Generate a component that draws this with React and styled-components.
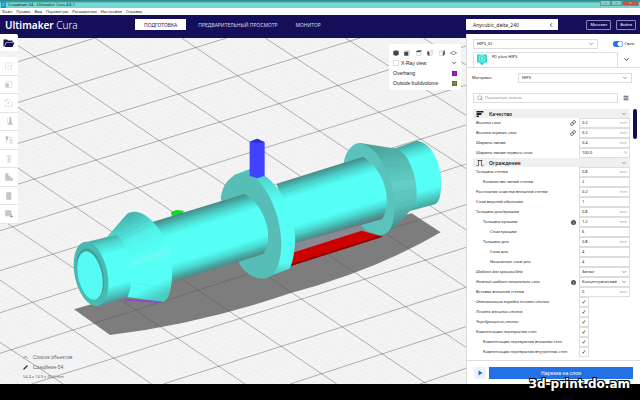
import React, { useId, useState } from 'react';
import styled, { createGlobalStyle, css } from 'styled-components';
import { ChevronDown, ChevronLeft, Link, Menu, Pencil, Search } from 'lucide-react';

const GlobalStyle = createGlobalStyle`
  * {
    box-sizing: border-box;
  }

  body {
    margin: 0;
    background: #000;
    font-family: "Noto Sans", "Open Sans", sans-serif;
    font-size: 4px;
    line-height: 6px;
    color: #222;
  }

  button, input, select {
    font: inherit;
    color: inherit;
    margin: 0;
    padding: 0;
    border: none;
    background: none;
  }
`;

const tools = ['move', 'scale', 'rotate', 'mirror', 'mesh', 'support', 'steps', 'block', 'plugin'];

const quality = [
  { label: 'Высота слоя', value: '0.2', unit: 'mm', italic: true, icon: 'link' },
  { label: 'Высота первого слоя', value: '0.2', unit: 'mm', italic: true, icon: 'link' },
  { label: 'Ширина линии', value: '0.4', unit: 'mm' },
  { label: 'Ширина линии первого слоя', value: '100.0', unit: '%' },
];

const shell = [
  { label: 'Толщина стенки', value: '0.8', unit: 'mm' },
  { label: 'Количество линий стенки', value: '2', level: 1 },
  { label: 'Расстояние очистки внешней стенки', value: '0.2', unit: 'mm' },
  { label: 'Слои верхней оболочки', value: '1' },
  { label: 'Толщина дна/крышки', value: '0.8', unit: 'mm' },
  { label: 'Толщина крышки', value: '1.2', unit: 'mm', level: 1, icon: 'info' },
  { label: 'Слои крышки', value: '6', level: 2 },
  { label: 'Толщина дна', value: '0.8', unit: 'mm', level: 1 },
  { label: 'Слои дна', value: '4', level: 2 },
  { label: 'Начальные слои дна', value: '4', level: 2 },
  { label: 'Шаблон для крышки/дна', type: 'select', value: 'Зигзаг', italic: true },
  { label: 'Нижний шаблон начального слоя', type: 'select', value: 'Концентрический', italic: true, icon: 'info' },
  { label: 'Вставка внешней стенки', value: '0', unit: 'mm' },
  { label: 'Оптимизация порядка печати стенок', type: 'check', italic: true },
  { label: 'Печать внешних стенок', type: 'check', italic: true },
  { label: 'Чередующиеся стенки', type: 'check', italic: true },
  { label: 'Компенсация перекрытия стен', type: 'check' },
  { label: 'Компенсация перекрытия внешних стен', type: 'check', level: 1 },
  { label: 'Компенсация перекрытия внутренних стен', type: 'check', level: 1 },
];

// x1, y1, x2, y2 of the build plate lines
const gridLines = [
  [0, 10, 1398, 952], [0, 195, 1280, 1062], [0, 378, 1010, 1062], [0, 565, 735, 1062],
  [0, 750, 455, 1062], [0, 937, 190, 1062], [285, 24, 1398, 772], [545, 24, 1398, 600],
  [795, 24, 1398, 416], [1035, 24, 1398, 256], [1270, 24, 1398, 105],
  [0, 112, 285, 24], [0, 234, 680, 24], [0, 357, 1080, 24], [0, 479, 1398, 48],
  [0, 602, 1398, 165], [0, 722, 1398, 285], [0, 848, 1398, 402], [0, 970, 1398, 524],
  [95, 1062, 1398, 652], [490, 1062, 1398, 772], [870, 1062, 1398, 890], [1260, 1062, 1398, 1015],
];

const Scene = () => (
  <SceneSvg viewBox="0 24 1398 1038" preserveAspectRatio="xMinYMin slice" aria-hidden="true">
    <defs>
      <pattern id="fine" width="10" height="10" patternUnits="userSpaceOnUse" patternTransform="matrix(1.84 -.57 1.25 .85 0 10)">
        <path d="M0 0H10M0 0V10" stroke="#e8e8e8" strokeWidth="1.2" />
      </pattern>
      <linearGradient id="tube1" gradientUnits="userSpaceOnUse" x1="600" y1="533" x2="656" y2="716">
        <stop offset="0" stopColor="#468a87" />
        <stop offset=".06" stopColor="#45aaa4" />
        <stop offset=".15" stopColor="#4bd8d0" />
        <stop offset=".28" stopColor="#55fff6" />
        <stop offset=".72" stopColor="#55fff6" />
        <stop offset=".84" stopColor="#4bd8d0" />
        <stop offset=".94" stopColor="#489f9b" />
        <stop offset="1" stopColor="#5b7f80" />
      </linearGradient>
      <linearGradient id="tube2" href="#tube1" gradientTransform="translate(360 -113)" />
      <linearGradient id="front" gradientUnits="userSpaceOnUse" x1="300" y1="622" x2="352" y2="815">
        <stop offset="0" stopColor="#45a49e" />
        <stop offset=".12" stopColor="#4bd8d0" />
        <stop offset=".28" stopColor="#55fff6" />
        <stop offset=".75" stopColor="#55fff6" />
        <stop offset=".88" stopColor="#49cbc3" />
        <stop offset="1" stopColor="#4c8f90" />
      </linearGradient>
      <linearGradient id="cone1" gradientUnits="userSpaceOnUse" x1="342" y1="575" x2="450" y2="812">
        <stop offset="0" stopColor="#47b4ad" />
        <stop offset=".12" stopColor="#4bd0c8" />
        <stop offset=".28" stopColor="#53f3ea" />
        <stop offset=".5" stopColor="#55fff6" />
        <stop offset=".85" stopColor="#55fff6" />
        <stop offset="1" stopColor="#4bcdc5" />
      </linearGradient>
      <linearGradient id="cone2" gradientUnits="userSpaceOnUse" x1="1150" y1="345" x2="1215" y2="590">
        <stop offset="0" stopColor="#4ea39d" />
        <stop offset=".2" stopColor="#54b6af" />
        <stop offset=".5" stopColor="#62cfc7" />
        <stop offset=".75" stopColor="#58c0b8" />
        <stop offset="1" stopColor="#438a86" />
      </linearGradient>
      <linearGradient id="end" gradientUnits="userSpaceOnUse" x1="1225" y1="338" x2="1280" y2="530">
        <stop offset="0" stopColor="#449c97" />
        <stop offset=".12" stopColor="#4bd5cd" />
        <stop offset=".25" stopColor="#55fff6" />
        <stop offset=".75" stopColor="#55fff6" />
        <stop offset="1" stopColor="#43a29c" />
      </linearGradient>
      <linearGradient id="rim" x1="0" y1="0" x2="0" y2="1">
        <stop offset="0" stopColor="#4fbdb5" />
        <stop offset=".12" stopColor="#50ddd5" />
        <stop offset=".3" stopColor="#55fff6" />
        <stop offset=".85" stopColor="#55fbf2" />
        <stop offset="1" stopColor="#4db5ae" />
      </linearGradient>
    </defs>

    <rect y="24" width="1398" height="1038" fill="#f4f4f4" />
    <rect y="24" width="1398" height="1038" fill="url(#fine)" />
    <path d="M222 838L330 915Q600 882 870 790Q1130 720 1322 607L1235 550L880 640L520 750Z" fill="#7d7d7d" />
    <g stroke="#555" strokeOpacity=".55" strokeWidth="2.4">
      {gridLines.map(([x1, y1, x2, y2]) => (
        <line key={`${x1}-${y1}`} x1={x1} y1={y1} x2={x2} y2={y2} />
      ))}
    </g>
    <path d="M885 634L1100 568L1130 605L880 670Z" fill="#8a8890" />
    <path d="M513 546L530 540L551 542L548 556L515 558Z" fill="#0ddb1c" />
    <path d="M878 668L1085 602L1148 620L872 708Z" fill="#cd0000" />
    <path d="M872 708L1148 620L1135 618L873 702Z" fill="#8d0000" />

    {/* far end */}
    <path d="M1180 357L1250 332C1300 338 1328 410 1323 475C1321 505 1316 517 1305 523L1230 543Z" fill="url(#end)" />
    <path d="M1080 339L1195 357C1238 385 1258 470 1247 525L1168 608L1130 570Z" fill="url(#cone2)" />
    <g stroke="#3f908b" strokeOpacity=".18" strokeWidth="2">
      <path d="M1125 365L1215 378M1150 405L1232 410M1166 450L1244 445M1177 490L1250 480M1182 530L1248 503M1180 560L1247 520" />
    </g>
    <path d="M1030 405C1035 360 1060 339 1080 339C1145 350 1197 480 1180 570C1173 607 1155 616 1140 615C1115 612 1098 602 1088 592Z" fill="#5ac4bc" />
    <path d="M830 462L1090 380C1155 420 1178 515 1146 568L884 640Z" fill="url(#tube2)" />

    {/* middle ring */}
    <path d="M700 436L750 417L790 434C862 482 890 590 885 640C882 680 876 704 868 716L785 747Z" fill="url(#rim)" />
    <path d="M662 504C668 455 700 427 742 428C802 455 850 570 843 660C838 722 815 747 785 746C755 743 730 725 718 700Z" fill="#56beb6" />
    <path d="M455 577L735 492C800 530 822 630 790 672L518 757Z" fill="url(#tube1)" />
    <g stroke="#3d9691" strokeOpacity=".22" strokeWidth="2">
      <path d="M480 585L750 503M485 596L762 513M530 734L795 652M525 743L790 664M840 475L1105 391M850 488L1114 404M885 607L1158 535M885 620L1154 548" />
    </g>
    <path d="M749 335L772 326L794 337V437L772 445L749 437Z" fill="#4141ff" />
    <path d="M749 335L772 326L794 337L772 340Z" fill="#3030cf" />

    {/* near end */}
    <path d="M370 806L490 814L475 819L375 812Z" fill="#8b4fc4" />
    <path d="M318 625L380 553Q388 545 405 545C462 548 518 650 517 710C517 780 505 811 490 815L375 800Z" fill="url(#cone1)" />
    <path d="M395 690L505 650L512 676L395 712Z" fill="#8af7f1" opacity=".35" />
    <g stroke="#3f9f99" strokeOpacity=".2" strokeWidth="2">
      <path d="M335 622L405 552M345 622L423 560M354 625L440 572M362 630L455 586M396 758L508 776M392 772L503 794" />
    </g>
    <path d="M250 638L350 615C398 655 407 745 383 800L295 829Z" fill="url(#front)" />
    <g transform="rotate(-12 273 732)">
      <ellipse cx="273" cy="732" rx="49" ry="98" fill="#49b9b1" />
      <ellipse cx="271" cy="732" rx="39" ry="79" fill="#409f99" />
      <ellipse cx="269" cy="736" rx="36" ry="74" fill="#55fbf2" />
    </g>
  </SceneSvg>
);

const ToolIcon = ({ name }) => (
  <svg width="10" height="10" viewBox="0 0 20 20" fill="none" stroke="#c9c9cf" strokeWidth="1.5">
    {name === 'move' && <path d="M3 4H15V16H3ZM6 12L9 8L12 12L16 10" stroke="#dddde2" />}
    {name === 'scale' && <><path d="M3 5H15V17H3Z" stroke="#dddde2" /><path d="M4 9H9V16H4Z" fill="#c9c9cf" /></>}
    {name === 'rotate' && <path d="M3 8V3H12L16 7V17H3V12M6 10H12M9 7V13" strokeDasharray="4 2" />}
    {name === 'mirror' && <><path d="M7 3V17" stroke="#dddde2" /><path d="M11 3H14V11L17 17H9L11 12Z" fill="#b9b9c4" /></>}
    {name === 'mesh' && <><path d="M3 3H8V9H5V16" fill="#bbb" /><path d="M11 5H17M14 8L17 12H11ZM10 16H18" /></>}
    {name === 'support' && <path d="M4 4H15M7 8H12V12H6M5 16H14M10 4V16" />}
    {name === 'steps' && <path d="M3 3H8V8H12V12H17V17H3Z" fill="#c4c4ce" />}
    {name === 'block' && <path d="M5 3H14V17H5Z" fill="#c4c4ce" />}
    {name === 'plugin' && <><path d="M3 3H14V14H3ZM8 3V14M3 8H14" fill="#c4c4ce" /><path d="M15 11V18M12 15H18" stroke="#a9a9b5" strokeWidth="2" /></>}
  </svg>
);

const cubeFills = ['M8 1L15 4V12L8 15L1 12V4Z', 'M1 5H11V15H1Z', 'M1 4L5 1H15L11 5H1Z', 'M1 3L6 6V15L1 12Z', 'M11 5L15 1V11L11 15Z'];

const CubeIcon = ({ fill }) => (
  <svg width="6" height="6" viewBox="0 0 16 16" stroke="#666" strokeWidth="1" fill="none">
    <path d="M1 5H11V15H1ZM1 5L5 1H15V11L11 15M11 5L15 1" strokeOpacity=".5" />
    <path d={fill} fill="#444" />
  </svg>
);

const SettingRow = ({ item }) => {
  const id = useId();
  const [value, setValue] = useState(item.value || '');
  const [checked, setChecked] = useState(true);

  return (
    <Row>
      <RowLabel htmlFor={id} $level={item.level || 0} $italic={item.italic}>{item.label}</RowLabel>
      {item.icon === 'link' && <Link size={6} color="#333" strokeWidth={3} />}
      {item.icon === 'info' && <InfoDot>i</InfoDot>}
      <Field>
        {item.type === 'check' && (
          <CheckBox id={id} type="checkbox" checked={checked} onChange={(e) => setChecked(e.target.checked)} />
        )}
        {item.type === 'select' && (
          <FieldBox>
            <Select id={id} defaultValue={item.value}>
              <option>{item.value}</option>
            </Select>
            <ChevronDown size={6} color="#333" />
          </FieldBox>
        )}
        {!item.type && (
          <FieldBox>
            <TextInput id={id} value={value} onChange={(e) => setValue(e.target.value)} />
            {item.unit && <Unit>{item.unit}</Unit>}
          </FieldBox>
        )}
      </Field>
    </Row>
  );
};

const App = () => {
  const [search, setSearch] = useState('');

  return (
    <>
      <GlobalStyle />
      <Window>
        <TitleBar>
          <AppBadge>C</AppBadge>
          <span>Соедйнин-54 - Ultimaker Cura 4.6.1</span>
          <WindowButtons>
            <WindowButton aria-label="Свернуть">–</WindowButton>
            <WindowButton aria-label="Развернуть">▫</WindowButton>
            <WindowButton aria-label="Закрыть" $close>×</WindowButton>
          </WindowButtons>
        </TitleBar>
        <MenuBar>
          {['Файл', 'Правка', 'Вид', 'Параметры', 'Расширения', 'Настройки', 'Справка'].map((m) => (
            <button key={m}>{m}</button>
          ))}
        </MenuBar>
        <Header>
          <Logo><b>Ultimaker</b> Cura</Logo>
          <Stages>
            <StageTab $active>ПОДГОТОВКА</StageTab>
            <StageTab>ПРЕДВАРИТЕЛЬНЫЙ ПРОСМОТР</StageTab>
            <StageTab>МОНИТОР</StageTab>
          </Stages>
          <Account>
            <Machine>Anycubic_delta_240<ChevronLeft size={6} strokeWidth={3} /></Machine>
            <OutlineButton>Магазин</OutlineButton>
            <OutlineButton>Войти</OutlineButton>
          </Account>
        </Header>

        <Workspace>
          <Viewport>
            <Scene />
            <Toolbar>
              <OpenButton aria-label="Открыть файл">
                <svg width="12" height="10" viewBox="0 0 24 20" fill="#10104e">
                  <path d="M1 18V3H8L10 5H19V8H6L3 16Z" />
                  <path d="M7 9H23L19 18H3Z" />
                </svg>
              </OpenButton>
              <ToolList>
                {tools.map((t) => (
                  <ToolButton key={t} aria-label={t}><ToolIcon name={t} /></ToolButton>
                ))}
              </ToolList>
            </Toolbar>

            <ViewCard>
              <ViewIcons>
                {cubeFills.map((f) => <CubeIcon key={f} fill={f} />)}
                <svg width="7" height="6" viewBox="0 0 16 12" fill="none" stroke="#555" strokeWidth="1.5">
                  <path d="M1 6L6 3H10L15 6L10 9H6Z" />
                </svg>
              </ViewIcons>
              <ViewRow>
                <ViewSwatch />
                <ViewName>X-Ray view</ViewName>
                <ChevronDown size={6} color="#222" strokeWidth={3} />
              </ViewRow>
              <ViewRow><span>Overhang</span><Swatch $color="#a31fc4" /></ViewRow>
              <ViewRow><span>Outside buildvolume</span><Swatch $color="#86863f" /></ViewRow>
            </ViewCard>

            <ModelInfo>
              <InfoLine>
                <svg width="5" height="5" viewBox="0 0 10 10" fill="none" stroke="#555" strokeWidth="1.5"><path d="M1 6L5 3L9 6" /></svg>
                Список объектов
              </InfoLine>
              <InfoLine><Pencil size={5} fill="#333" />Соедйнин-54</InfoLine>
              <div>54.4 x 14.9 x 20.0 mm</div>
            </ModelInfo>
          </Viewport>

          <SidePanel>
            <ProfileRow>
              <SelectBox>
                <Select aria-label="Профиль" defaultValue="HIPS_02"><option>HIPS_02</option></Select>
                <ChevronDown size={6} color="#333" />
              </SelectBox>
              <Switch><input type="checkbox" defaultChecked />Своя</Switch>
            </ProfileRow>
            <ExtruderRow>
              <ExtruderTab>
                <svg width="12" height="12" viewBox="0 0 24 24">
                  <path d="M2 1H22V17H17L12 23L7 17H2Z" fill="#2fd9c9" />
                  <circle cx="12" cy="9" r="6" fill="none" stroke="#b8f6ef" strokeWidth="1.5" />
                  <path d="M12 6V12" stroke="#fff" strokeWidth="2" />
                </svg>
                <span>FD plast HIPS</span>
              </ExtruderTab>
              <IconCell><ChevronDown size={7} strokeWidth={3} /></IconCell>
            </ExtruderRow>
            <MaterialRow>
              <label htmlFor="material">Материал</label>
              <SelectBox>
                <Select id="material" defaultValue="HIPS"><option>HIPS</option></Select>
                <ChevronDown size={6} color="#333" />
              </SelectBox>
            </MaterialRow>
            <SearchRow>
              <SearchBox>
                <Search size={6} color="#777" />
                <TextInput
                  aria-label="Поиск"
                  placeholder="Параметры поиска"
                  value={search}
                  onChange={(e) => setSearch(e.target.value)}
                />
              </SearchBox>
              <IconCell><Menu size={6} strokeWidth={3} /></IconCell>
            </SearchRow>

            <SettingsArea>
              <SettingsList>
                <SectionHeader>
                  <svg width="8" height="6" viewBox="0 0 16 12" fill="#222"><path d="M1 0H15V3H1ZM1 4H11V8H1ZM1 9H6V12H1Z" /></svg>
                  <span>Качество</span>
                  <ChevronDown size={6} color="#444" />
                </SectionHeader>
                {quality.map((item) => <SettingRow key={item.label} item={item} />)}
                <SectionHeader>
                  <svg width="8" height="6" viewBox="0 0 16 12" fill="none" stroke="#444" strokeWidth="1.5"><path d="M1 11H5V1H11V11H15M3 1H13" /></svg>
                  <span>Ограждение</span>
                  <ChevronDown size={6} color="#444" />
                </SectionHeader>
                {shell.map((item) => <SettingRow key={item.label} item={item} />)}
              </SettingsList>
              <ScrollThumb />
            </SettingsArea>

            <ActionBar>
              <PlayButton aria-label="Предпросмотр">
                <svg width="5" height="6" viewBox="0 0 10 12" fill="#1f66d6"><path d="M1 1L9 6L1 11Z" /></svg>
              </PlayButton>
              <SliceButton>Нарезка на слои</SliceButton>
            </ActionBar>
          </SidePanel>
        </Workspace>
        <Watermark>3d-print.do.am</Watermark>
      </Window>
    </>
  );
};

const Window = styled.div`
  position: relative;
  display: flex;
  flex-direction: column;
  min-height: 100vh;
  padding-bottom: 16px;
  overflow: hidden;
`;

const TitleBar = styled.div`
  display: flex;
  align-items: flex-end;
  gap: 2px;
  height: 8px;
  padding: 0 1px;
  color: #021c1c;
  background: linear-gradient(#2b8987 0, #3b9c99 20%, #7adad5 40%, #74d3ce 100%);
`;

const AppBadge = styled.span`
  width: 5px;
  height: 6px;
  text-align: center;
  color: #fff;
  background: #1595d6;
`;

const WindowButtons = styled.div`
  display: flex;
  align-self: flex-start;
  padding-top: 1px;
  margin-left: auto;
`;

const WindowButton = styled.button`
  width: ${(p) => (p.$close ? '17px' : '11px')};
  height: 5px;
  line-height: 4px;
  color: ${(p) => (p.$close ? '#fff' : '#244')};
  background: ${(p) => (p.$close ? '#c9534c' : '#8cc4c2')};
  border: 1px solid #5a9c9a;
  border-top: none;
`;

const MenuBar = styled.nav`
  display: flex;
  align-items: center;
  gap: 4px;
  height: 7px;
  padding: 0 2px;
  background: #fff;
`;

const Header = styled.header`
  display: flex;
  align-items: center;
  height: 23px;
  padding-bottom: 4px;
  color: #fff;
  background: #150e58;
`;

const Logo = styled.div`
  width: 135px;
  padding-left: 5px;
  font-size: 10px;
  line-height: 12px;
  font-weight: 300;

  b {
    font-weight: 600;
  }
`;

const Stages = styled.nav`
  display: flex;
  flex: 1;
  gap: 6px;
`;

const StageTab = styled.button`
  height: 11px;
  padding: 0 ${(p) => (p.$active ? '9px' : '6px')};
  font-size: 5px;
  color: ${(p) => (p.$active ? '#150e58' : '#dcdcee')};
  background: ${(p) => (p.$active ? '#fff' : 'none')};
`;

const Account = styled.div`
  display: flex;
  align-items: center;
  gap: 5px;
  width: 174px;
  padding-right: 4px;
`;

const Machine = styled.button`
  display: flex;
  flex-shrink: 0;
  align-items: center;
  justify-content: space-between;
  width: 92px;
  height: 11px;
  margin-right: auto;
  padding: 0 4px 0 7px;
  font-size: 5px;
  color: #222;
  background: #fff;
`;

const OutlineButton = styled.button`
  height: 10px;
  padding: 0 3px;
  border: 1px solid #8c88b5;
  border-radius: 1px;
`;

const Workspace = styled.main`
  display: flex;
  flex: 1;
`;

const Viewport = styled.section`
  position: relative;
  flex: 1;
  min-width: 0;
`;

const SceneSvg = styled.svg`
  position: absolute;
  inset: 0;
  width: 100%;
  height: 100%;
`;

const Toolbar = styled.div`
  position: relative;
  display: flex;
  flex-direction: column;
  gap: 6px;
  width: 18px;
  margin-top: -4px;
`;

const OpenButton = styled.button`
  display: grid;
  place-items: center;
  height: 17px;
  background: #fff;
  border-radius: 0 2px 2px 0;
`;

const ToolList = styled.div`
  display: grid;
  grid-auto-rows: 1fr;
  height: 167px;
  background: #fff;
`;

const ToolButton = styled.button`
  display: grid;
  place-items: center;
  border-bottom: 1px solid #e3e3e8;
`;

const ViewCard = styled.div`
  position: absolute;
  top: 6px;
  right: 5px;
  width: 72px;
  padding: 4px 4px 2px;
  background: #fff;
  border-radius: 2px;
  font-family: "Liberation Sans", sans-serif;
  font-size: 5px;
`;

const ViewIcons = styled.div`
  display: flex;
  justify-content: space-between;
  align-items: center;
  height: 9px;
  margin-bottom: 1px;
`;

const ViewRow = styled.div`
  display: flex;
  justify-content: space-between;
  align-items: center;
  gap: 2px;
  height: 10px;
`;

const ViewName = styled.span`
  flex: 1;
`;

const ViewSwatch = styled.i`
  width: 6px;
  height: 6px;
  border: 1px solid #ddd;
`;

const Swatch = styled.i`
  width: 5px;
  height: 5px;
  background: ${(p) => p.$color};
  border: 1px solid rgba(0, 0, 0, 0.2);
`;

const ModelInfo = styled.div`
  position: absolute;
  left: 23px;
  bottom: 4px;
  display: flex;
  flex-direction: column;
  gap: 4px;
  color: #666;
`;

const InfoLine = styled.div`
  display: flex;
  align-items: center;
  gap: 5px;
  font-family: "Liberation Sans", sans-serif;
  font-size: 5px;
`;

const SidePanel = styled.aside`
  position: relative;
  display: flex;
  flex-direction: column;
  width: 174px;
  margin-top: -4px;
  padding-top: 5px;
  background: #fff;
  border-left: 1px solid #ddd;
`;

const box = css`
  display: flex;
  align-items: center;
  height: 10px;
  padding: 0 3px;
  border: 1px solid #ddd;
  background: #fff;
`;

const SelectBox = styled.div`
  ${box}
  flex: 1;
`;

const Select = styled.select`
  flex: 1;
  min-width: 0;
  appearance: none;
  outline: none;
`;

const TextInput = styled.input`
  flex: 1;
  min-width: 0;
  outline: none;

  &::placeholder {
    color: #999;
  }
`;

const ProfileRow = styled.div`
  display: flex;
  align-items: center;
  gap: 15px;
  padding: 0 6px;
`;

const Switch = styled.label`
  display: flex;
  align-items: center;
  gap: 2px;

  input {
    appearance: none;
    width: 10px;
    height: 6px;
    border-radius: 3px;
    background: radial-gradient(circle at 7px 3px, #fff 2px, transparent 3px), #2a6fdf;
  }
`;

const ExtruderRow = styled.div`
  display: flex;
  align-items: flex-end;
  padding: 0 6px;
  margin-top: 3px;
  border-bottom: 1px solid #ddd;
`;

const ExtruderTab = styled.div`
  display: flex;
  flex: 1;
  gap: 4px;
  height: 15px;
  padding: 1px 2px;
  border: 1px solid #ddd;
  border-bottom: none;
  border-radius: 2px 2px 0 0;
`;

const IconCell = styled.span`
  display: grid;
  place-items: center;
  width: 16px;
  height: 15px;
`;

const MaterialRow = styled.div`
  display: flex;
  align-items: center;
  padding: 0 8px 0 5px;
  margin-top: 5px;

  label {
    width: 46px;
  }
`;

const SearchRow = styled.div`
  display: flex;
  align-items: center;
  padding: 0 6px;
  margin-top: 7px;
`;

const SearchBox = styled.div`
  ${box}
  flex: 1;
  gap: 2px;
`;

const SettingsArea = styled.div`
  display: flex;
  justify-content: space-between;
  padding: 0 3px 0 6px;
  margin-top: 4px;
`;

const SettingsList = styled.div`
  flex: 1;
  margin-right: 3px;
`;

const ScrollThumb = styled.div`
  width: 4px;
  height: 30px;
  border-radius: 2px;
  background: #10104e;
`;

const SectionHeader = styled.h2`
  display: flex;
  align-items: center;
  gap: 5px;
  height: 9px;
  margin: 0;
  padding: 0 3px;
  font-size: 5px;
  font-weight: 600;
  background: #f0f0f0;

  span {
    flex: 1;
  }
`;

const Row = styled.div`
  display: flex;
  align-items: center;
  gap: 3px;
  height: 10px;
  padding-left: 3px;
`;

const RowLabel = styled.label`
  flex: 1;
  padding-left: ${(p) => p.$level * 7}px;
  font-style: ${(p) => (p.$italic ? 'italic' : 'normal')};
  white-space: nowrap;
`;

const InfoDot = styled.span`
  width: 5px;
  height: 5px;
  line-height: 5px;
  border-radius: 50%;
  text-align: center;
  color: #fff;
  background: #555;
`;

const Field = styled.div`
  width: 51px;
`;

const FieldBox = styled.div`
  ${box}
  padding: 0 2px;
`;

const Unit = styled.span`
  color: #aaa;
`;

const CheckBox = styled.input`
  appearance: none;
  display: grid;
  place-items: center;
  width: 10px;
  height: 10px;
  border: 1px solid #ddd;

  &:checked::after {
    content: "✓";
    font-family: "DejaVu Sans", sans-serif;
    font-size: 6px;
    font-weight: bold;
    line-height: 8px;
  }
`;

const ActionBar = styled.div`
  display: flex;
  align-items: flex-start;
  flex: 1;
  gap: 3px;
  margin-top: 3px;
  padding: 6px 7px 0;
  border-top: 1px solid #ddd;
`;

const PlayButton = styled.button`
  display: grid;
  place-items: center;
  width: 12px;
  height: 12px;
  background: #edf1f8;
`;

const SliceButton = styled.button`
  flex: 1;
  height: 12px;
  font-size: 5px;
  color: #fff;
  background: #2470e6;
`;

const Watermark = styled.div`
  position: absolute;
  right: 10px;
  bottom: 8px;
  font-family: "DejaVu Sans", sans-serif;
  font-size: 12px;
  line-height: 16px;
  font-weight: bold;
  color: #fff;
  text-shadow: 1px 1px 0 #000, -1px 1px 0 #000, 1px -1px 0 #000, -1px -1px 0 #000;
`;

export default App;
